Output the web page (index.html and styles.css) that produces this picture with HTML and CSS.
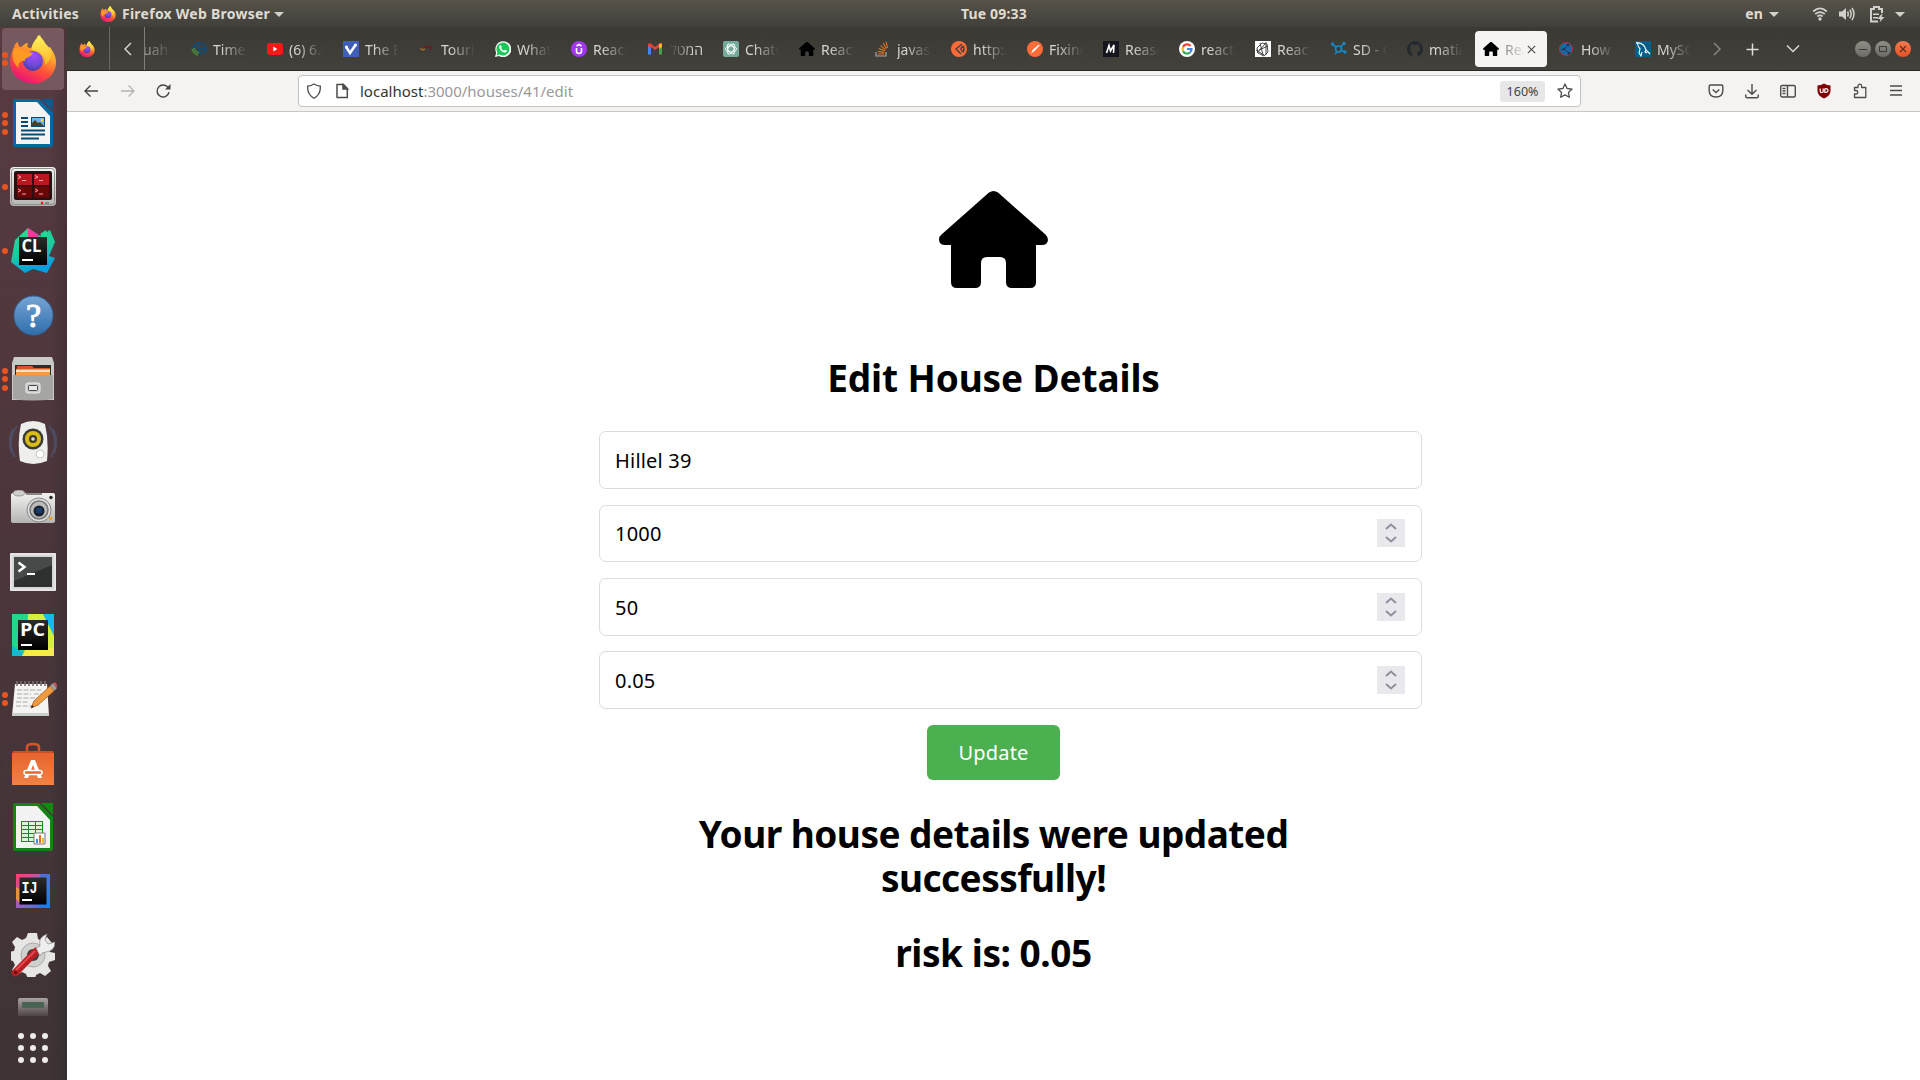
FILE: index.html
```html
<!DOCTYPE html>
<html lang="en">
<head>
<meta charset="utf-8">
<title>Edit House Details</title>
<link rel="stylesheet" href="styles.css">
</head>
<body>
<svg class="defs" width="0" height="0" aria-hidden="true">
  <defs>
    <linearGradient id="ffBody" x1=".8" y1="0" x2=".3" y2="1"><stop offset="0" stop-color="#fff14f"/><stop offset=".35" stop-color="#ffa52a"/><stop offset=".65" stop-color="#ff4d3a"/><stop offset="1" stop-color="#e8107c"/></linearGradient>
    <radialGradient id="ffGlobe" cx=".55" cy=".25" r=".8"><stop offset="0" stop-color="#a24cf5"/><stop offset=".6" stop-color="#6f4ad8"/><stop offset="1" stop-color="#3d3a9c"/></radialGradient>
    <linearGradient id="ffTail" x1="0" y1="0" x2="0" y2="1"><stop offset="0" stop-color="#fff45c"/><stop offset="1" stop-color="#ffb42c"/></linearGradient>
    <linearGradient id="silver" x1="0" y1="0" x2="0" y2="1"><stop offset="0" stop-color="#f2f2f0"/><stop offset="1" stop-color="#b4b4b2"/></linearGradient>
    <linearGradient id="dark" x1="0" y1="0" x2="0" y2="1"><stop offset="0" stop-color="#2c2c2c"/><stop offset="1" stop-color="#000"/></linearGradient>
    <linearGradient id="blue" x1="0" y1="0" x2="0" y2="1"><stop offset="0" stop-color="#76a5d6"/><stop offset="1" stop-color="#2f6eaa"/></linearGradient>
    <linearGradient id="orange" x1="0" y1="0" x2="0" y2="1"><stop offset="0" stop-color="#e8642f"/><stop offset="1" stop-color="#f08246"/></linearGradient>
    <linearGradient id="clion" x1="0" y1="0" x2=".3" y2="1"><stop offset="0" stop-color="#22e08a"/><stop offset=".6" stop-color="#1fc9a0"/><stop offset="1" stop-color="#0a9ddf"/></linearGradient>
    <linearGradient id="idea" x1="0" y1="0" x2="1" y2="1"><stop offset="0" stop-color="#ff3e6c"/><stop offset=".45" stop-color="#a85cb8"/><stop offset="1" stop-color="#0a84ff"/></linearGradient>
    <linearGradient id="calcFade" x1="0" y1="0" x2="0" y2="1"><stop offset="0" stop-color="#a9a5a4"/><stop offset="1" stop-color="#a9a5a4" stop-opacity=".15"/></linearGradient>
  </defs>
  <symbol id="firefox" viewBox="0 0 46 48">
    <path d="M4 12c0-2 2-4 4-5 0 3 1 5 3 5l4-3c1-1 2-1 3-1-1 2-1 4 1 5l5-1 4-12c8 6 6 8 10 13l2-1c4 6 6 10 6 15a23 21 0 0 1-46 1c0-7 2-12 4-16z" fill="url(#ffBody)"/>
    <path d="M30 0c-5 5-9 9-8 15 8 1 14 7 13 15 5-4 8-10 5-16-3-5-8-7-10-14z" fill="url(#ffTail)"/>
    <circle cx="23" cy="26" r="10" fill="url(#ffGlobe)"/>
    <path d="M4 13c3-1 7 0 10 3l9 2c-2 5-9 4-8 8-4-1-8 3-6 7-6-4-8-12-5-20z" fill="#ff9a25"/>
  </symbol>
  <symbol id="house" viewBox="0 0 109 97">
    <path d="M50 1.5Q54.5-1.5 59 1.5L106.5 43.5Q109 46 109 49Q108.5 54 103 54H97V91Q97 97 91 97H73Q67 97 67 91V72Q67 66 61 66H48Q42 66 42 72V91Q42 97 36 97H18Q12 97 12 91V54H6Q0 54 0 48Q0 45.5 2.5 43.5Z"/>
  </symbol>
</svg>

<div class="desktop">
  <header class="topbar">
    <div class="topbar-left">
      <span class="activities">Activities</span>
      <svg class="app-icon" width="16" height="16"><use href="#firefox"/></svg>
      <span class="app-name">Firefox Web Browser</span>
      <i class="caret"></i>
    </div>
    <span class="clock">Tue 09:33</span>
    <div class="topbar-right">
      <span>en</span><i class="caret en-caret"></i>
      <svg class="wifi" width="16" height="14" viewBox="0 0 16 14" fill="none" stroke="#d2d0cc" stroke-width="1.7"><path d="M1.2 4.5Q8-1.7 14.8 4.5M3.2 7.2Q8 3 12.8 7.2M5.3 9.5Q8 7.4 10.7 9.5"/><circle cx="8" cy="12" r="1.7" fill="#d2d0cc" stroke="none"/></svg>
      <svg class="volume" width="16" height="14" viewBox="0 0 16 14" fill="none" stroke="#d2d0cc" stroke-width="1.5"><path d="M0 4.5h3L7 1v12L3 9.500H0z" fill="#d2d0cc" stroke="none"/><path d="M8.500 4.500q1.500 2.500 0 5M10.700 2.700q3 4.300 0 8.600M13 1q4 6 0 12"/></svg>
      <svg class="battery" width="15" height="17" viewBox="0 0 15 17"><path d="M12 7V3H9V1H4v2H1v12.500h7" fill="none" stroke="#d2d0cc" stroke-width="2"/><path d="M3 7.500h6v1.500H3zM3 11h5v1.500H3zM11.500 8l-4 5h3l-1 3.500 5-5.500h-3l1-3z" fill="#d2d0cc"/></svg>
      <i class="caret"></i>
    </div>
  </header>

  <div class="workspace">
    <nav class="dock">
      <div class="dock-item active"><i class="dots"><b></b><b></b></i><svg width="46" height="48"><use href="#firefox"/></svg></div>
      <div class="dock-item"><i class="dots"><b></b><b></b><b></b></i>
        <svg width="40" height="48" viewBox="0 0 40 48"><path d="M2 0h24l14 14v32q0 2-2 2H2q-2 0-2-2V2q0-2 2-2z" fill="#0369a3"/><path d="M28 0h12v12z" fill="#0a5a90"/><path d="M3 3h21l13 14v28H3z" fill="#f4f4f4"/><path d="M8 18h7v2H8zm0 4h7v2H8zm0 4h7v2H8zm0 4.500h24v2H8zm0 4h24v2H8zm0 4h18v2H8z" fill="#0b4a75"/><path d="M18 18h14v10H18z" fill="#0b4a75"/><path d="M19 19h12v8H19z" fill="#6bb6ec"/><path d="M19 27v-3l3-3 3 3 2-1 4 4z" fill="#44432f"/><circle cx="29" cy="21" r="1.500" fill="#f9d34c"/></svg></div>
      <div class="dock-item"><i class="dots"><b></b></i>
        <svg width="46" height="40" viewBox="0 0 46 40"><rect width="46" height="39" rx="4" fill="url(#silver)"/><rect x="1.500" y="1.500" width="43" height="36" rx="3" fill="none" stroke="#8b8d87"/><rect x="4" y="4" width="38" height="29" rx="2" fill="#2a1010"/><path d="M7 7h15v11H7zM24 7h15v11H24z" fill="#b8181e"/><path d="M7 19.500h15v11H7zM24 19.500h15v11H24z" fill="#6d0508"/><path d="M8 8.500l3 1.500-3 1.500m4 2h4M25 8.500l3 1.500-3 1.500m4 2h4M8 22l3 1.500-3 1.500m4 2h4M25 22l3 1.500-3 1.500m4 2h4" fill="none" stroke="#f3aaaa"/><circle cx="32" cy="36" r="1.300" fill="#e11"/><path d="M35 35h4v2h-4z" fill="#888"/></svg></div>
      <div class="dock-item"><i class="dots"><b></b></i>
        <svg width="46" height="46" viewBox="0 0 46 46"><path d="M5 12L18 0l12 8 10-6 5 12-6 14 6 2-8 15-14-4-8 4L1 34z" fill="url(#clion)"/><path d="M18 0l12 8-12 4z" fill="#ee3a9d"/><path d="M30 6l9 8-3-12z" fill="#1edb98"/><rect x="9" y="9" width="28" height="28" fill="url(#dark)"/><text x="11.500" y="24" class="logo-text" textLength="20" lengthAdjust="spacingAndGlyphs">CL</text><path d="M12 31h11v2H12z" fill="#fff"/></svg></div>
      <div class="dock-item">
        <svg width="41" height="41" viewBox="0 0 41 41"><circle cx="20.500" cy="20.500" r="19.500" fill="url(#blue)" stroke="#32679c"/><text x="20.500" y="32" class="help-text">?</text></svg></div>
      <div class="dock-item"><i class="dots"><b></b><b></b><b></b></i>
        <svg width="42" height="44" viewBox="0 0 42 44"><path d="M2 0h38l2 6v37H0V6z" fill="#c9c9c7"/><path d="M3 8h36v12H3z" fill="#2e2a28"/><path d="M5 9h15l2 2h16v8H4z" fill="#d8552a"/><path d="M4 12h34v6H4z" fill="#f8983f"/><path d="M4 13h34v2H4z" fill="#ffe1c2"/><path d="M1 18h40v24q-20 3-40 0z" fill="#a5a5a3"/><rect x="14" y="26" width="14" height="10" rx="2" fill="#c8c8c8" stroke="#ededed"/><rect x="16.500" y="28.500" width="9" height="5" rx="1" fill="#e8e8e8" stroke="#444"/></svg></div>
      <div class="dock-item">
        <svg width="48" height="44" viewBox="0 0 48 44"><path d="M8 5Q-3 20 6 36M4 8Q-2 20 3 32M40 5Q51 20 42 36M44 8Q50 20 45 32" fill="none" stroke="#4b618a" stroke-width="2" opacity=".5"/><path d="M12 3Q24-3 36 3Q40 20 38 40Q24 46 11 40Q8 20 12 3z" fill="#eeeeec"/><circle cx="24" cy="18" r="10.500" fill="#3a3a38"/><circle cx="24" cy="18" r="8" fill="#d9bb18"/><circle cx="24" cy="18" r="4" fill="#3d3a25"/><circle cx="24" cy="18" r="1.800" fill="#ddd"/><circle cx="31" cy="33" r="4" fill="#fff" stroke="#c8c8c6"/></svg></div>
      <div class="dock-item">
        <svg width="44" height="34" viewBox="0 0 44 34"><rect y="3" width="44" height="30" rx="2" fill="url(#silver)"/><path d="M1 3h42v2H1z" fill="#ececec"/><ellipse cx="8" cy="3" rx="6" ry="3" fill="#cfcfcd" stroke="#888" stroke-width=".8"/><path d="M15 3h16v2H15z" fill="#888"/><circle cx="28" cy="20" r="12" fill="#ddd" stroke="#888"/><circle cx="28" cy="20" r="9" fill="#bbb" stroke="#777" stroke-width="1.500"/><circle cx="28" cy="21" r="5.500" fill="#1c222c"/><path d="M25 18h6v5h-6z" fill="#183c70"/><circle cx="40" cy="7.500" r="1.700" fill="#222"/><path d="M38 27h3v3h-3z" fill="#f3a01e"/></svg></div>
      <div class="dock-item low">
        <svg width="46" height="38" viewBox="0 0 46 38"><rect width="46" height="38" rx="1" fill="#d6d8d6"/><rect x="1" y="1" width="44" height="36" fill="none" stroke="#f3f3f3"/><rect x="4" y="4" width="38" height="30" fill="#2f3131"/><path d="M4 4h38v8L4 28z" fill="#484a4a"/><path d="M8.500 9.500l6 4.500-6 4.500" fill="none" stroke="#fff" stroke-width="2.500"/><path d="M17 20h8v2h-8z" fill="#fff"/></svg></div>
      <div class="dock-item">
        <svg width="42" height="42" viewBox="0 0 42 42"><path d="M0 0h42v42H0z" fill="#21d789"/><path d="M28 0h14v14z" fill="#0bbbf0"/><path d="M16 0h16l10 20v22H14z" fill="#d6ef3d"/><path d="M31 0h11v22z" fill="#12bde8"/><path d="M0 32l18 10H0z" fill="#13b9cf"/><path d="M14 34h28v8H10z" fill="#f5ec4c"/><rect x="6" y="6" width="30" height="30" fill="url(#dark)"/><text x="8" y="22" class="logo-text" textLength="25" lengthAdjust="spacingAndGlyphs">PC</text><path d="M9 30h11v2H9z" fill="#fff"/></svg></div>
      <div class="dock-item"><i class="dots"><b></b><b></b></i>
        <svg class="wide" width="46" height="38" viewBox="0 0 46 38"><path d="M3 4h32l2 32H0z" fill="#f4f4f2"/><path d="M1 33h36v3H0z" fill="#c9d0c8"/><path d="M5 1v5m4-5v5m4-5v5m4-5v5m4-5v5m4-5v5m4-5v5m4-5v5" stroke="#77736f" stroke-width="1.600"/><path d="M5 10h25M5 14h14m3 0h8M5 18h20M4 22h12M4 26h18" stroke="#aaa" stroke-dasharray="5 1.500" fill="none"/><path d="M19 28l3-7L38 6l4 5-16 14z" fill="#ee9a3f" stroke="#a85c18" stroke-width=".8"/><path d="M38 6l3-3 4 5-3 3z" fill="#9e9a94"/><path d="M41 3q4-2 4 4z" fill="#ee4a55"/><path d="M19 28l1-3 2 2z" fill="#222"/></svg></div>
      <div class="dock-item">
        <svg width="42" height="43" viewBox="0 0 42 43"><path d="M15 14V5q0-3 6-3t6 3v9" fill="none" stroke="#d9532a" stroke-width="2.500"/><path d="M1 9h40l1 3H0z" fill="#cf4f25"/><path d="M0 11h42v32H0z" fill="url(#orange)"/><path d="M19 18h4l7 18h-4l-5-13-5 13h-4z" fill="#fff"/><rect x="12" y="28.500" width="18" height="4" rx="2" fill="#e86530" stroke="#fff" stroke-width="1.500"/></svg></div>
      <div class="dock-item">
        <svg width="40" height="48" viewBox="0 0 40 48"><path d="M2 0h24l14 14v32q0 2-2 2H2q-2 0-2-2V2q0-2 2-2z" fill="#168414"/><path d="M28 0h12v12z" fill="#128a10"/><path d="M3 3h21l13 14v28H3z" fill="#f2f2f2"/><path d="M8 18h22v21H8z" fill="#1c8b1c"/><path d="M9 19h6v3H9zm7 0h6v3h-6zm7 0h6v3h-6zM9 23h6v3H9zm7 0h6v3h-6zm7 0h6v3h-6zM9 27h6v3H9zm7 0h6v3h-6zm7 0h6v3h-6zM9 31h6v3H9zm7 0h6v3h-6zM9 35h6v3H9zm7 0h6v3h-6z" fill="#dff2d5"/><path d="M21 30h11v11H21z" fill="#fff" stroke="#777"/><path d="M23 36h2v4h-2z" fill="#3a8bd8"/><path d="M26 32h2v8h-2z" fill="#ea6a24"/><path d="M29 35h2v5h-2z" fill="#efb62e"/></svg></div>
      <div class="dock-item">
        <svg width="34" height="34" viewBox="0 0 34 34"><path d="M0 0h34v34H0z" fill="url(#idea)"/><path d="M0 13l4 2v14l-4-4z" fill="#e5913b"/><path d="M24 0h10v34H22z" fill="#157ff2" opacity=".6"/><rect x="3.500" y="3.500" width="27" height="27" fill="url(#dark)"/><text x="5.500" y="19" class="mono-text" textLength="16" lengthAdjust="spacingAndGlyphs">IJ</text><path d="M6 25h10v2H6z" fill="#fff"/></svg></div>
      <div class="dock-item">
        <svg width="44" height="44" viewBox="0 0 44 44"><path d="M17 0h9l1 6 4 2 5-4 5 6-3 5 1 4 5 1v7l-6 2-1 4 3 5-6 5-5-3-4 2-1 4h-7l-2-5-4-2-5 3-5-5 3-5-2-4-5-1v-8l6-1 1-4-3-5 5-5 5 3 4-2z" fill="#e6e6e4"/><circle cx="22" cy="22" r="12" fill="#d0d0ce" stroke="#aaa"/><circle cx="22" cy="22" r="6" fill="#453a3c"/><path d="M4.500 39.500L25 18.500" stroke="#b91f25" stroke-width="7.500" stroke-linecap="round"/><path d="M5 37L24 18" stroke="#e5484c" stroke-width="2"/><path d="M25 15l4-2q-2-9 7-12l-2 6 3 4 7-2q0 9-9 10l-4 1-2 3z" fill="#eee" stroke="#888" stroke-width=".7"/><circle cx="4.500" cy="39.500" r="1.800" fill="#6d1013"/></svg></div>
      <div class="dock-item cut">
        <svg width="30" height="18" viewBox="0 0 30 18"><path d="M2 0h26q2 0 2 2v16H0V2q0-2 2-2z" fill="url(#calcFade)"/><rect x="4" y="4" width="22" height="6" rx="1" fill="#4b6353"/><path d="M4 16q3-4 5 0zm8 0q3-4 5 0zm8 0q3-4 5 0z" fill="#5d5153"/></svg></div>
      <svg class="apps" width="32" height="32" viewBox="0 0 32 32" fill="#eeecea"><circle cx="4" cy="4" r="3"/><circle cx="16" cy="4" r="3"/><circle cx="28" cy="4" r="3"/><circle cx="4" cy="16" r="3"/><circle cx="16" cy="16" r="3"/><circle cx="28" cy="16" r="3"/><circle cx="4" cy="28" r="3"/><circle cx="16" cy="28" r="3"/><circle cx="28" cy="28" r="3"/></svg>
    </nav>

    <main class="browser">
      <div class="tabstrip">
        <div class="pinned"><svg width="16" height="16"><use href="#firefox"/></svg></div>
        <div class="scroll-left"><svg width="8" height="14" viewBox="0 0 8 14"><path d="M7 1L1 7l6 6" fill="none" stroke="#dcdad5" stroke-width="1.400"/></svg></div>
        <div class="tabs">
          <div class="tab partial"><span class="label">uah sh</span></div>
          <div class="tab"><svg width="16" height="16" fill="none" stroke="#0c4f80" stroke-width="1.500"><ellipse cx="9" cy="7" rx="6.500" ry="5" transform="rotate(15 9 7)"/><path d="M3 5q6 4 12 3M9 2q-3 4 0 10"/><path d="M1 8q2 5 6 6M3 7q1 4 5 5" stroke="#4f8a35"/></svg><span class="label">Timer</span></div>
          <div class="tab"><svg width="16" height="16"><rect y="2" width="16" height="12" rx="3" fill="#f91818"/><path d="M6.300 5.500l4 2.500-4 2.500z" fill="#fff"/></svg><span class="label">(6) 6.0</span></div>
          <div class="tab"><svg width="16" height="16"><path d="M0 0h16v16H0z" fill="#3f5fb8"/><path d="M3.500 6.500L7 12l5.500-8" fill="none" stroke="#fff" stroke-width="2.500"/><circle cx="3.500" cy="6" r="1.500" fill="#fff"/><circle cx="12.500" cy="4" r="1.500" fill="#fff"/></svg><span class="label">The Be</span></div>
          <div class="tab"><svg width="16" height="16"><path d="M4 5h9v4h-2V7H5z" fill="#641f28"/><path d="M2 7q0 3 4 1" stroke="#a36922" stroke-width="1.500" fill="none"/></svg><span class="label">Touris</span></div>
          <div class="tab"><svg width="16" height="16"><path d="M0 16l1.200-4.200A8 8 0 1 1 4 14.900z" fill="#fff"/><path d="M1.500 14.500l.9-3.100a6.500 6.500 0 1 1 2.200 2.200z" fill="#20c45a"/><path d="M5.500 4l1.400 2-.8 1q1 2 3 2.700l1-1 2 1.100q-.8 2.200-2.700 1.700Q5 10.300 4.200 6.300 4.200 4.600 5.500 4z" fill="#fff"/></svg><span class="label">Whats</span></div>
          <div class="tab"><svg width="16" height="16"><circle cx="8" cy="8" r="8" fill="#a435f0"/><path d="M5.500 7v3q0 2.500 2.500 2.500t2.500-2.500V7M5.500 5L8 3.500 10.500 5" fill="none" stroke="#fff" stroke-width="1.600"/></svg><span class="label">React</span></div>
          <div class="tab"><svg width="16" height="16"><path d="M1 3v10h3V6l4 3 4-3v7h3V3l-2-1-5 4-5-4z" fill="#e74335"/><path d="M1 5v8.500h3V7z" fill="#4285f4"/><path d="M12 7v6.500h3V5z" fill="#34a853"/><path d="M12 3.500q2-2 3-.5v3l-3 2z" fill="#fbbc04"/></svg><span class="label rtl" dir="rtl">המטלה</span></div>
          <div class="tab"><svg width="16" height="16"><rect width="16" height="16" rx="2" fill="#74aa9c"/><g fill="none" stroke="#fff" stroke-width=".9"><ellipse cx="8" cy="8" rx="5.500" ry="3"/><ellipse cx="8" cy="8" rx="5.500" ry="3" transform="rotate(60 8 8)"/><ellipse cx="8" cy="8" rx="5.500" ry="3" transform="rotate(120 8 8)"/></g></svg><span class="label">ChatG</span></div>
          <div class="tab"><svg width="16" height="16"><use href="#house"/></svg><span class="label">React</span></div>
          <div class="tab"><svg width="16" height="16" fill="none"><path d="M1 11v4h10v-4" stroke="#a5a8aa" stroke-width="1.200"/><path d="M3 13h6M3 10.500l6.300.9M3.800 7.500l6 2.300M5.500 4.600l5 4M8 2l3.500 5.500M11 .5L12.500 7" stroke="#e8771e" stroke-width="1.100"/></svg><span class="label">javasc</span></div>
          <div class="tab"><svg width="16" height="16"><circle cx="8" cy="8" r="8" fill="#ff6c37"/><path d="M11 3L5 8l5 5M12 5q-4 3 0 6 2-3 0-6" fill="none" stroke="#46403a" stroke-width="1.500"/></svg><span class="label">http://</span></div>
          <div class="tab"><svg width="16" height="16"><circle cx="8" cy="8" r="8" fill="#ff6c37"/><path d="M4 12.500l2-4L12 3.500l.6 1L7.500 10z" fill="#fff"/></svg><span class="label">Fixing</span></div>
          <div class="tab"><svg width="16" height="16"><path d="M0 0h16v16H0z" fill="#151520"/><path d="M3.500 12L6 4.500 7.500 10l3.500-6-.5 8" fill="none" stroke="#fff" stroke-width="1.600"/></svg><span class="label">Reaso</span></div>
          <div class="tab"><svg width="16" height="16" fill="none" stroke-width="2.200"><circle cx="8" cy="8" r="8" fill="#fff"/><path d="M11.500 5A4.500 4.500 0 0 0 4 6" stroke="#ea4335"/><path d="M4 6a5 5 0 0 0 0 4" stroke="#fbbc05"/><path d="M4 10a4.500 4.500 0 0 0 7 1.500" stroke="#34a853"/><path d="M11 11.500q1.700-1.500 1.500-3.500H8" stroke="#4285f4"/></svg><span class="label">react r</span></div>
          <div class="tab"><svg width="16" height="16"><path d="M0 0h16v16H0z" fill="#fff"/><g fill="none" stroke="#333" stroke-width=".9"><path d="M2 7l5-5 5 1 1 8-4 4-6-3zM2 12L10 3M5 2l3 12M13 5L4 9M11 1v13M1 9l8 5"/></g></svg><span class="label">React</span></div>
          <div class="tab"><svg width="16" height="16" fill="none" stroke="#1786c7" stroke-width="1.700"><circle cx="7.500" cy="8" r="3"/><path d="M1 3l4 3M10 6l3-4M10 9l4 2M6 11l-2 2"/><circle cx="1.500" cy="3" r=".8"/><circle cx="13" cy="2.500" r=".8"/><circle cx="14" cy="11" r=".8"/></svg><span class="label">SD - C</span></div>
          <div class="tab"><svg width="16" height="16"><path d="M8 0a8 8 0 0 0-2.500 15.600v-3Q3.500 13 2.800 11q1.500.2 2 1.200l1-.7Q3 11 3 7.500q0-1.500.8-2.300V3q1.500 0 2.400.8h3.600Q10.700 3 12.200 3v2.200q.8.800.8 2.300 0 3.500-3 4l.5 1v3.100A8 8 0 0 0 8 0z" fill="#24292f"/></svg><span class="label">matia</span></div>
          <div class="tab current"><svg width="16" height="16"><use href="#house"/></svg><span class="label">Rea</span><svg class="close" width="9" height="9" viewBox="0 0 9 9"><path d="M.8.8l7.400 7.400M8.200.8L.8 8.200" stroke="#4a4a4a" stroke-width="1.100"/></svg></div>
          <div class="tab"><svg width="16" height="16"><circle cx="7" cy="8" r="6.500" fill="#1769a5" stroke="#b52d35"/><path d="M9 4L5 8l5 4M5 8l-3 1" stroke="#233a55" fill="none"/><circle cx="9" cy="4" r="1.300" fill="#203247"/><circle cx="5" cy="8" r="1.300" fill="#203247"/><circle cx="10" cy="12" r="1.300" fill="#203247"/></svg><span class="label">How t</span></div>
          <div class="tab"><svg width="16" height="16"><path d="M0 0h16v16H0z" fill="#04608a"/><path d="M1 2q8-1 10 7l4 4M2 1q1 5 3 7l-1 4 2 3 1-4M11 9l-1 2 2 1" fill="none" stroke="#fff" stroke-width="1.100"/></svg><span class="label">MySQL</span></div>
        </div>
        <svg class="strip-tools" width="110" height="16" viewBox="0 0 110 16" fill="none" stroke-width="1.400"><path d="M3 2l6 6-6 6" stroke="#8d8b86"/><path d="M41.500 2.500v12M35.500 8.500h12" stroke="#dedcd7" stroke-width="1.500"/><path d="M76 4.500l6 6 6-6" stroke="#dedcd7"/></svg>
        <div class="window-buttons"><i><svg width="16" height="16"><path d="M4 8.500h8" stroke="#3b3a36"/></svg></i><i><svg width="16" height="16"><path d="M4.500 5.500h7v5h-7z" fill="none" stroke="#3b3a36"/></svg></i><i class="shut"><svg width="16" height="16"><path d="M5 5l6 6M11 5l-6 6" stroke="#54301f" stroke-width="1.100"/></svg></i></div>
      </div>

      <div class="toolbar">
        <div class="nav-buttons">
          <svg width="16" height="16" fill="none" stroke="#46453f" stroke-width="1.400"><path d="M15 8H2M7.500 2.500L2 8l5.500 5.500"/></svg>
          <svg width="16" height="16" fill="none" stroke="#b5b3b0" stroke-width="1.300"><path d="M2 8h13M9.500 2.500L15 8l-5.500 5.500"/></svg>
          <svg width="16" height="16" fill="none" stroke="#46453f" stroke-width="1.500"><path d="M14 9.200A6 6 0 1 1 13 4.500"/><path d="M15.500 1v5.500H10z" fill="#46453f" stroke="none"/></svg>
        </div>
        <div class="urlbar">
          <svg width="16" height="16" fill="none" stroke="#4d4c49" stroke-width="1.300"><path d="M8 1Q5 2.800 1.700 3.200v2.300Q2 12 8 15.200 14 12 14.300 5.500V3.200Q11 2.800 8 1z"/></svg>
          <svg width="16" height="16" fill="none" stroke="#4d4c49" stroke-width="1.500"><path d="M3 1.500h6.500L13.300 5.500v9H3z" stroke-linejoin="round"/><path d="M9 1.500V6h4.500z" fill="#4d4c49"/></svg>
          <span class="url"><b>localhost</b>:3000/houses/41/edit</span>
          <span class="zoom">160%</span>
          <svg class="star" width="16" height="16" fill="none" stroke="#4d4c49" stroke-width="1.300" stroke-linejoin="round"><path d="M8 1l2.100 4.500 5 .6-3.700 3.300 1 4.900L8 11.900l-4.400 2.400 1-4.900L.9 6.100l5-.6z"/></svg>
        </div>
        <div class="extensions">
          <svg width="16" height="16" fill="none" stroke="#4d4c49" stroke-width="1.400"><path d="M2.500 2h11q1.300 0 1.300 1.300V8q-.3 6-6.800 6T1.200 8V3.300Q1.200 2 2.500 2z"/><path d="M4.700 6.500L8 9.500l3.300-3"/></svg>
          <svg width="16" height="16" fill="none" stroke="#4d4c49" stroke-width="1.400"><path d="M8 1v10M3.500 7L8 11.300 12.500 7M1.700 11.500v1.700q0 1.500 1.500 1.500h9.600q1.500 0 1.500-1.500v-1.700"/></svg>
          <svg width="16" height="16" fill="none" stroke="#4d4c49" stroke-width="1.400"><rect x=".7" y="2.500" width="14.600" height="11.500" rx="1.500"/><path d="M7.500 2.500v11.500M2.500 5.500h3M2.500 8h3M2.500 10.500h3"/></svg>
          <svg width="16" height="16"><path d="M8 .5q3 2 6.500 2V8q0 4.500-6.500 7.500Q1.500 12.500 1.500 8V2.500q3.500 0 6.500-2z" fill="#800000"/><path d="M4.200 5.500v2.700q0 1.300 1.500 1.300t1.500-1.300V5.500M8.800 5.700v3.600q3.200.3 3.200-1.800t-3.200-1.800" fill="none" stroke="#fff" stroke-width="1.200"/></svg>
          <svg width="16" height="16" fill="none" stroke="#4d4c49" stroke-width="1.300" stroke-linejoin="round"><path d="M6 4.500V3a1.700 1.700 0 0 1 3.600 0v1.500h4.200v10H2.500V11H4a1.700 1.700 0 0 0 0-3.500H2.500v-3z"/></svg>
          <svg width="16" height="16" stroke="#4d4c49" stroke-width="1.400"><path d="M2 3h12M2 7.500h12M2 12h12"/></svg>
        </div>
      </div>

      <section class="page">
        <svg class="logo" width="109" height="97"><use href="#house"/></svg>
        <h1 class="title">Edit House Details</h1>
        <form class="form">
          <div class="field"><input type="text" value="Hillel 39"></div>
          <div class="field"><input type="text" inputmode="numeric" value="1000"><svg class="spin" width="28" height="28"><path d="M9 10l5-4.500 5 4.500M9 18l5 4.500 5-4.500"/></svg></div>
          <div class="field"><input type="text" inputmode="numeric" value="50"><svg class="spin" width="28" height="28"><path d="M9 10l5-4.500 5 4.500M9 18l5 4.500 5-4.500"/></svg></div>
          <div class="field"><input type="text" inputmode="numeric" value="0.05"><svg class="spin" width="28" height="28"><path d="M9 10l5-4.500 5 4.500M9 18l5 4.500 5-4.500"/></svg></div>
        </form>
        <button class="update" type="button">Update</button>
        <h1 class="message">Your house details were updated<br>successfully!</h1>
        <h1 class="risk">risk is: 0.05</h1>
      </section>
    </main>
  </div>
</div>
</body>
</html>
```

FILE: styles.css
```css
* { box-sizing: border-box; }
body { margin: 0; background: #fff; font-family: "Noto Sans", "Open Sans", sans-serif; overflow: hidden; }
svg { display: block; flex: none; }
.defs { position: absolute; }
.desktop { width: 1920px; height: 1080px; display: flex; flex-direction: column; }

.topbar { height: 27px; flex: none; display: grid; grid-template-columns: 949px auto 1fr; align-items: center; padding: 0 15px 0 12px; background: linear-gradient(#57534a, #403f3a); color: #dfdbd2; font-size: 14px; font-weight: 700; line-height: 26px; letter-spacing: .15px; }
.topbar > * { padding-top: 1px; }
.topbar-left, .topbar-right { display: flex; align-items: center; }
.topbar-right { justify-content: flex-end; }
.activities { width: 68px; white-space: nowrap; letter-spacing: .2px; }
.app-icon { margin: 0 6px 0 20px; }
.app-name { width: 150px; white-space: nowrap; letter-spacing: .25px; }
.clock { width: 66px; white-space: nowrap; }
.caret { border: 5px solid transparent; border-top-color: #d2d0cc; border-bottom: 0; margin-left: 2px; }
.en-caret { margin-left: 6px; }
.wifi { margin-left: 33px; }
.volume { margin-left: 11px; }
.battery { margin-left: 15px; }
.battery + .caret { margin-left: 10px; }

.workspace { flex: 1; display: flex; min-height: 0; }
.dock { width: 67px; flex: none; display: flex; flex-direction: column; background: linear-gradient(90deg, transparent 75%, rgba(30, 35, 35, .25)), linear-gradient(#583b41, #4c363c 45%, #3e3335); }
.dock-item { height: 64px; flex: none; display: grid; grid-template-columns: 8px 50px; align-items: center; justify-items: center; }
.dock-item > svg { grid-column: 2; grid-row: 1; }
.dock-item.active { width: 62px; height: 62px; margin: 1px 0 1px 2px; grid-template-columns: 6px 50px; background: #75595f; border-radius: 4px; }
.dock-item.low { padding-top: 2px; }
.dock-item.cut { height: 45px; align-items: start; padding-top: 11px; }
.dots { grid-column: 1; grid-row: 1; display: flex; flex-direction: column; gap: 2.500px; margin-left: 2px; }
.active .dots { margin-left: 0; }
.dots b { width: 6px; height: 6px; border-radius: 50%; background: #e95420; }
.wide { margin-left: 4px; }
.apps { margin: 0 0 0 17px; }
.logo-text { font: 700 18px "Open Sans", sans-serif; fill: #fff; }
.mono-text { font: 700 17px "Liberation Mono", monospace; fill: #fff; }
.help-text { font: 34px "Liberation Serif", serif; fill: #fff; stroke: #fff; text-anchor: middle; }

.browser { flex: 1; min-width: 0; display: flex; flex-direction: column; }
.tabstrip { height: 44px; flex: none; display: flex; align-items: stretch; background: linear-gradient(#3b3934, #43413c); border-bottom: 1px solid #2b2724; color: #d8d5cf; }
.pinned { width: 43px; display: flex; align-items: center; padding-left: 12px; border-right: 1px solid #6b6964; }
.scroll-left { width: 35px; display: flex; align-items: center; padding-left: 14px; border-right: 1px solid #807e79; }
.tabs { width: 1558px; display: flex; overflow: hidden; align-items: center; }
.tab { width: 76px; height: 36px; flex: none; display: flex; align-items: center; padding-left: 8px; gap: 6px; margin-top: 1px; }
.tab.partial { width: 38px; padding: 0; }
.label { width: 34px; overflow: hidden; white-space: nowrap; font-size: 14px; line-height: 24px; padding-top: 1px; -webkit-mask-image: linear-gradient(90deg, #000 25%, transparent); mask-image: linear-gradient(90deg, #000 25%, transparent); }
.label.rtl { -webkit-mask-image: linear-gradient(270deg, #000 25%, transparent); mask-image: linear-gradient(270deg, #000 25%, transparent); }
.partial .label { width: 28px; text-indent: -2px; -webkit-mask-image: linear-gradient(90deg, #000a, transparent); mask-image: linear-gradient(90deg, #000a, transparent); }
.tab.current { width: 72px; margin-right: 4px; background: #f5f4f2; border-radius: 4px; color: #555; }
.current .label { width: 18px; -webkit-mask-image: linear-gradient(90deg, #000a, #0002); mask-image: linear-gradient(90deg, #000a, #0002); }
.current .close { margin-left: -2px; }
.strip-tools { margin: 14px 0 0 8px; }
.window-buttons { display: flex; gap: 4px; margin: 14px 0 0 34px; }
.window-buttons i { width: 16px; height: 16px; border-radius: 50%; background: linear-gradient(#908e87, #6d6b65); }
.window-buttons .shut { background: linear-gradient(#f67a50, #e65221); }

.toolbar { height: 41px; flex: none; display: flex; align-items: center; background: #f4f3f1; border-bottom: 1px solid #c9c7c5; }
.nav-buttons { display: flex; gap: 20px; width: 231px; padding-left: 16px; }
.urlbar { width: 1283px; height: 32px; display: flex; align-items: center; padding: 0 7px; background: #fff; border: 1px solid #c5c3c1; border-radius: 4px; }
.urlbar > svg + svg { margin-left: 12px; }
.url { flex: 1; margin-left: 10px; color: #999; font-size: 15px; line-height: 26px; white-space: nowrap; }
.url b { font-weight: 400; color: #333; }
.zoom { width: 45px; height: 21px; line-height: 21px; text-align: center; background: #e7e7e7; border-radius: 3px; color: #444; font-size: 12.500px; }
.star { margin-left: 12px; }
.extensions { display: flex; gap: 20px; margin-left: 127px; }

.page { flex: 1; display: flex; flex-direction: column; align-items: center; padding-top: 79px; background: #fff; color: #000; }
h1 { margin: 0; font-size: 37px; line-height: 44px; font-weight: 700; text-align: center; white-space: nowrap; }
.title { margin-top: 68px; letter-spacing: -.12px; }
.form { width: 823px; margin: 31.200px 0 0 34px; display: flex; flex-direction: column; gap: 15.800px; }
.field { height: 57.600px; display: flex; align-items: center; padding: 0 16px 0 15px; border: 1px solid #dcdcdc; border-radius: 7px; }
.field input { flex: 1; min-width: 0; padding: 2px 0 0; border: 0; outline: 0; background: none; font: 20px/28px "Noto Sans", "Open Sans", sans-serif; letter-spacing: .2px; color: #000; }
.spin { background: #e9e9ed; fill: none; stroke: #8f8f9d; stroke-width: 2; }
.update { width: 133px; height: 55px; margin-top: 16px; padding: 1px 0 0; border: 0; border-radius: 6px; background: #4caf50; color: #fff; font: 20px/54px "Noto Sans", "Open Sans", sans-serif; letter-spacing: .2px; }
.message { margin-top: 32px; letter-spacing: -.53px; }
.risk { margin-top: 31px; letter-spacing: -.45px; }
```
